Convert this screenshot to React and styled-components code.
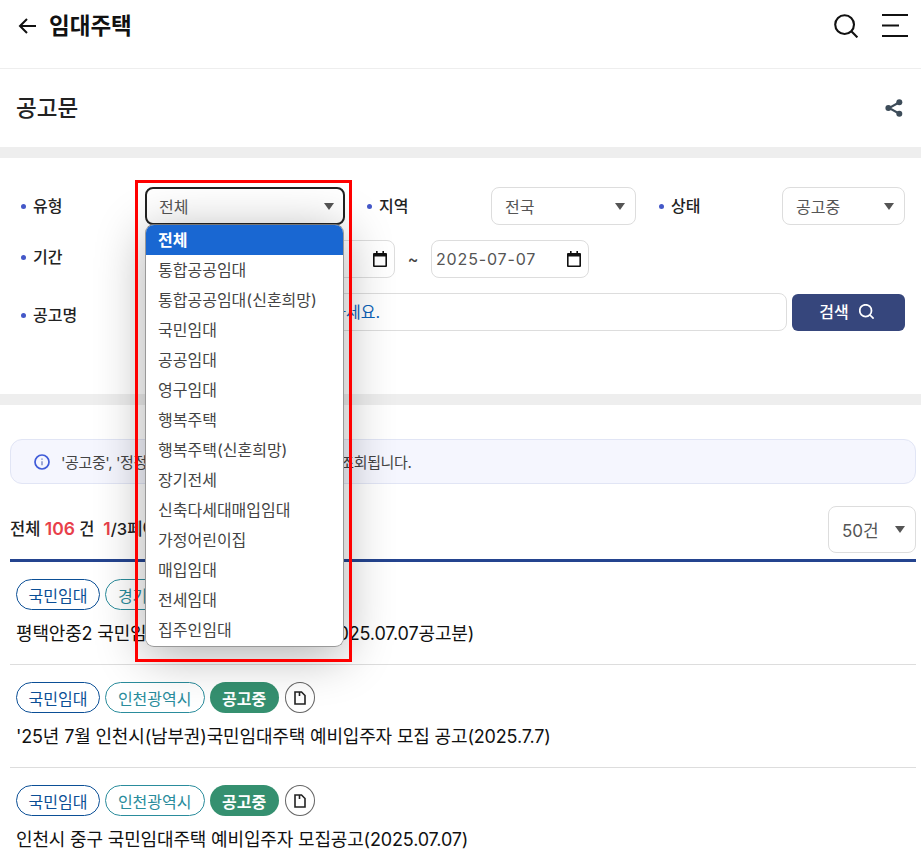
import React from 'react';
import styled, { createGlobalStyle } from 'styled-components';

const GlobalStyle = createGlobalStyle`
  html, body {
    margin: 0;
    padding: 0;
    height: 859px;
    overflow: hidden;
    background: #fff;
  }
  body {
    font-family: Inter, "Noto Sans CJK KR", sans-serif;
    color: #111;
  }
  * { box-sizing: border-box; }
`;

const Page = styled.div`
  position: relative;
  width: 921px;
`;

const Header = styled.header`
  height: 69px;
  display: flex;
  align-items: center;
  justify-content: space-between;
  padding: 0 13px 17px 18px;
  border-bottom: 1px solid #eee;
`;

const HeaderLeft = styled.div`
  display: flex;
  align-items: center;
  gap: 13px;
`;

const HeaderRight = styled.div`
  display: flex;
  align-items: center;
  gap: 24px;
`;

const AppTitle = styled.h1`
  margin: 0;
  font-size: 22.5px;
  line-height: 28px;
  font-weight: 700;
  color: #111;
`;

const TitleBar = styled.div`
  height: 78px;
  display: flex;
  align-items: center;
  justify-content: space-between;
  padding: 0 18px 0 16px;
`;

const PageTitle = styled.h2`
  margin: 0;
  font-size: 22.5px;
  line-height: 30px;
  font-weight: 500;
  color: #222;
`;

const Band = styled.div`
  height: 11px;
  background: #eee;
`;

const Filters = styled.section`
  display: flex;
  flex-direction: column;
  gap: 15px;
  padding: 29px 16px 63px 21px;
`;

const Row = styled.div`
  display: flex;
  align-items: center;
  height: 38px;
`;

const Label = styled.label`
  display: flex;
  align-items: center;
  gap: 7px;
  flex: none;
  width: ${p => p.$width}px;
  margin-left: ${p => p.$left || 0}px;
  padding-top: ${p => p.$down || 0}px;
  padding-bottom: ${p => p.$up ?? 2}px;
  font-size: 16px;
  font-weight: 500;
  color: #222;

  &::before {
    content: '';
    width: 5px;
    height: 5px;
    border-radius: 50%;
    background: #4458c8;
    margin-top: 3px;
  }
`;

const SelectBox = styled.div`
  flex: none;
  width: ${p => p.$width}px;
  height: ${p => p.$height || 38}px;
  display: flex;
  align-items: center;
  justify-content: space-between;
  padding: 0 10px 0 13px;
  border: 1px solid #ddd;
  border-radius: 8px;
  background: #fff;
  font-size: ${p => p.$size || 16}px;
  color: #555;
`;

const FocusedSelect = styled(SelectBox)`
  border: 2px solid #222;
  padding-left: 12px;
  padding-right: 9px;
`;

const Caret = styled.span`
  width: 0;
  height: 0;
  border-left: 5.5px solid transparent;
  border-right: 5.5px solid transparent;
  border-top: 7px solid #555;
`;

const DateBox = styled.div`
  flex: none;
  width: ${p => p.$width}px;
  height: 38px;
  display: flex;
  align-items: center;
  justify-content: space-between;
  padding: 0 6px 0 4px;
  border: 1px solid #ddd;
  border-radius: 8px;
  font-size: 16px;
  letter-spacing: 0.85px;
  color: #555;
`;

const Tilde = styled.span`
  width: 36px;
  text-align: center;
  font-size: 16px;
  font-weight: 500;
  color: #444;
`;

const SearchInput = styled.div`
  flex: none;
  width: 642px;
  height: 38px;
  display: flex;
  align-items: center;
  justify-content: flex-end;
  padding: 0 406px 2px 14px;
  border: 1px solid #ddd;
  border-radius: 8px;
  font-size: 16px;
  color: #0b62b8;
  white-space: nowrap;
`;

const SearchButton = styled.button`
  flex: none;
  width: 113px;
  height: 37px;
  margin-left: 5px;
  display: flex;
  align-items: center;
  justify-content: center;
  gap: 10px;
  padding: 0 4px 2px 0;
  border: 0;
  border-radius: 6px;
  background: #36467c;
  color: #fff;
  font-family: inherit;
  font-size: 16px;
  font-weight: 500;
`;

const Notice = styled.div`
  height: 45px;
  margin: 34px 5px 0 10px;
  display: flex;
  align-items: center;
  gap: 11px;
  padding: 0 0 0 23px;
  border: 1px solid #e1e5f5;
  border-radius: 12px;
  background: #f5f6fe;
  font-size: 15px;
  letter-spacing: -0.4px;
  color: #444;
`;

const SummaryRow = styled.div`
  display: flex;
  align-items: center;
  justify-content: space-between;
  margin: 22px 5px 6px 10px;
`;

const Summary = styled.div`
  font-size: 16.5px;
  font-weight: 500;
  line-height: 24px;
  color: #222;
  white-space: pre;
  padding-bottom: 2px;
`;

const Count = styled.b`
  color: #e8404a;
  font-size: 17.5px;
  font-weight: 600;
`;

const List = styled.ul`
  list-style: none;
  margin: 0 5px 0 10px;
  padding: 0;
  border-top: 3px solid #24448f;
`;

const Item = styled.li`
  height: 103px;
  padding: 17px 6px 0;
  border-bottom: 1px solid #ddd;
`;

const Tags = styled.div`
  display: flex;
  align-items: center;
  gap: 5px;
`;

const Tag = styled.span`
  height: 31px;
  display: inline-flex;
  align-items: center;
  padding: 0 11.5px;
  border: 1px solid #0b4f96;
  border-radius: 16px;
  font-size: 16px;
  color: #0b4f96;
  white-space: nowrap;
`;

const RegionTag = styled(Tag)`
  padding: 0 12px;
  border-color: #2a8c9c;
  color: #2a8c9c;
`;

const StatusTag = styled.span`
  height: 31px;
  display: inline-flex;
  align-items: center;
  padding: 0 12.5px;
  border-radius: 16px;
  background: #359070;
  color: #fff;
  font-size: 16px;
  font-weight: 700;
`;

const FileButton = styled.span`
  width: 30px;
  height: 31px;
  margin-left: 1px;
  display: inline-flex;
  align-items: center;
  justify-content: center;
  border: 1px solid #666;
  border-radius: 50%;
`;

const ItemTitle = styled.div`
  margin-top: 9px;
  font-size: 18px;
  line-height: 30px;
  font-weight: 400;
  letter-spacing: -0.16px;
  color: #111;
  white-space: nowrap;
`;

const Highlight = styled.div`
  position: absolute;
  left: 135px;
  top: 180px;
  width: 217px;
  height: 482px;
  border: 3px solid #f00;
  pointer-events: none;
`;

const Dropdown = styled.ul`
  position: absolute;
  left: 145px;
  top: 224px;
  width: 199px;
  margin: 0;
  padding: 0 0 1px;
  list-style: none;
  background: #fff;
  border: 1px solid #999;
  border-top-color: #777;
  border-radius: 9px;
  overflow: hidden;
  box-shadow: 0 8px 50px rgba(0, 0, 0, 0.32);
`;

const Option = styled.li`
  height: 30px;
  display: flex;
  align-items: center;
  padding: 0 0 2px 12px;
  font-size: 16px;
  font-weight: ${p => (p.$active ? 600 : 400)};
  color: ${p => (p.$active ? '#fff' : '#444')};
  background: ${p => (p.$active ? '#1967d2' : '#fff')};
`;

const ArrowIcon = () => (
  <svg width="18" height="18" viewBox="0 0 18 18" fill="none" stroke="#111" strokeWidth="2">
    <path d="M18 9H2M9 2 2 9l7 7" />
  </svg>
);

const SearchIcon = ({ size, color, width }) => (
  <svg width={size} height={size} viewBox="0 0 24 24" fill="none" stroke={color} strokeWidth={width}>
    <circle cx="10.6" cy="10.6" r="9.4" />
    <path d="m17.6 17.6 5.8 5.8" />
  </svg>
);

const MenuIcon = () => (
  <svg width="26" height="23" viewBox="0 0 26 23" fill="none" stroke="#111" strokeWidth="2">
    <path d="M0 1h26M0 11.5h17M0 22h26" />
  </svg>
);

const ShareIcon = () => (
  <svg width="18" height="18" viewBox="0 0 18 18" fill="#3d4c59" stroke="#3d4c59">
    <path d="M14 3.5 4 9l10 5.5" fill="none" strokeWidth="2" />
    <circle cx="14.3" cy="3.3" r="3" stroke="none" />
    <circle cx="3.4" cy="9" r="3" stroke="none" />
    <circle cx="14.3" cy="14.7" r="3" stroke="none" />
  </svg>
);

const CalendarIcon = () => (
  <svg width="16" height="16" viewBox="0 0 16 16" fill="#111">
    <path d="M4 0h1.6v2h4.8V0H12v2h2a1 1 0 0 1 1 1v12a1 1 0 0 1-1 1H2a1 1 0 0 1-1-1V3a1 1 0 0 1 1-1h2zM2.6 5.6v8.8h10.8V5.6z" />
  </svg>
);

const InfoIcon = () => (
  <svg width="16" height="16" viewBox="0 0 16 16" fill="none" stroke="#3f5bd8" strokeWidth="1.7">
    <circle cx="8" cy="8" r="7" />
    <path d="M8 7.2v4M8 4.4v1.4" stroke="#7a88c4" strokeWidth="1.4" />
  </svg>
);

const FileIcon = () => (
  <svg width="12" height="14" viewBox="0 0 12 14" fill="none" stroke="#222" strokeWidth="1.6">
    <path d="M1 1h6.5L11 4.5V13H1zM5.5 1v4" />
  </svg>
);

const options = ['전체', '통합공공임대', '통합공공임대(신혼희망)', '국민임대', '공공임대', '영구임대', '행복주택',
  '행복주택(신혼희망)', '장기전세', '신축다세대매입임대', '가정어린이집', '매입임대', '전세임대', '집주인임대'];

const items = [
  { region: '경기도', title: '평택안중2 국민임대 예비입주자 모집공고(2025.07.07공고분)' },
  { region: '인천광역시', title: "'25년 7월 인천시(남부권)국민임대주택 예비입주자 모집 공고(2025.7.7)" },
  { region: '인천광역시', title: '인천시 중구 국민임대주택 예비입주자 모집공고(2025.07.07)' },
];

export default function App() {
  return (
    <Page>
      <GlobalStyle />
      <Header>
        <HeaderLeft>
          <ArrowIcon />
          <AppTitle>임대주택</AppTitle>
        </HeaderLeft>
        <HeaderRight>
          <SearchIcon size={24} color="#111" width={2.1} />
          <MenuIcon />
        </HeaderRight>
      </Header>
      <TitleBar>
        <PageTitle>공고문</PageTitle>
        <ShareIcon />
      </TitleBar>
      <Band />
      <Filters>
        <Row>
          <Label $width={124}>유형</Label>
          <FocusedSelect $width={200}>전체<Caret /></FocusedSelect>
          <Label $width={124} $left={22}>지역</Label>
          <SelectBox $width={145}>전국<Caret /></SelectBox>
          <Label $width={123} $left={23}>상태</Label>
          <SelectBox $width={123}>공고중<Caret /></SelectBox>
        </Row>
        <Row>
          <Label $width={124} $up={6}>기간</Label>
          <DateBox $width={250}>2025-06-07<CalendarIcon /></DateBox>
          <Tilde>~</Tilde>
          <DateBox $width={158}>2025-07-07<CalendarIcon /></DateBox>
        </Row>
        <Row>
          <Label $width={124} $down={4} $up={0}>공고명</Label>
          <SearchInput>공고명을 입력하세요.</SearchInput>
          <SearchButton>검색<SearchIcon size={15} color="#fff" width={2.8} /></SearchButton>
        </Row>
      </Filters>
      <Band />
      <Notice>
        <InfoIcon />
        '공고중', '정정공고중' 상태의 공고만 기본으로 조회됩니다.
      </Notice>
      <SummaryRow>
        <Summary>전체 <Count>106</Count> 건  <Count>1</Count>/3페이지</Summary>
        <SelectBox $width={88} $height={47} $size={17}>50건<Caret /></SelectBox>
      </SummaryRow>
      <List>
        {items.map((item, i) => (
          <Item key={i}>
            <Tags>
              <Tag>국민임대</Tag>
              <RegionTag>{item.region}</RegionTag>
              <StatusTag>공고중</StatusTag>
              <FileButton><FileIcon /></FileButton>
            </Tags>
            <ItemTitle>{item.title}</ItemTitle>
          </Item>
        ))}
      </List>
      <Dropdown>
        {options.map((o, i) => (
          <Option key={o} $active={i === 0}>{o}</Option>
        ))}
      </Dropdown>
      <Highlight />
    </Page>
  );
}
